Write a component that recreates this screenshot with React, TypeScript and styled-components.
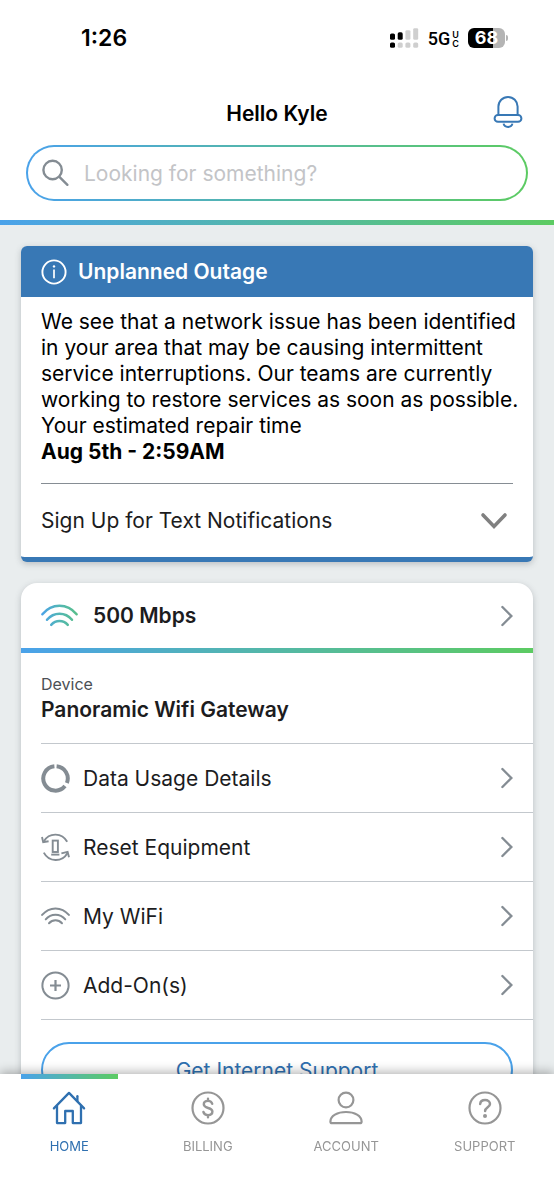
import React from 'react';
import styled, { createGlobalStyle } from 'styled-components';

const color = {
  blue: '#3878b5',
  link: '#2f70b0',
  sky: '#4aa2ea',
  page: '#e9edee',
  ink: '#1c1c1e',
  icon: '#848c93',
  tab: '#969696',
  line: '#c3c8cd',
};
const gradient = 'linear-gradient(90deg, #4aa2ea 0%, #54b8a6 50%, #5ccb62 100%)';

const GlobalStyle = createGlobalStyle`
  *, *::before, *::after { box-sizing: border-box; }
  body {
    margin: 0;
    background: #fff;
    color: ${color.ink};
    font-family: Inter, "Liberation Sans", sans-serif;
    -webkit-font-smoothing: antialiased;
  }
  h1, h2, p { margin: 0; }
  a { color: inherit; text-decoration: none; }
  button { font: inherit; color: inherit; border: 0; background: none; padding: 0; cursor: pointer; }
  svg { display: block; flex: none; }
`;

const Shell = styled.div`
  height: 100vh;
  display: flex;
  flex-direction: column;
`;

const StatusBar = styled.div`
  display: flex;
  align-items: center;
  justify-content: space-between;
  padding: 0 46px 0 81px;
  height: 75px;
  flex: none;
  color: #000;
`;

const Clock = styled.time`
  font-size: 23px;
  font-weight: 600;
`;

const StatusIcons = styled.div`
  display: flex;
  align-items: center;
`;

const Network = styled.div`
  display: flex;
  align-items: center;
  gap: 2px;
  margin: 2px 9px 0 9px;
  font-family: Roboto, sans-serif;
  font-size: 18px;
  font-weight: 500;
`;

const NetworkSuffix = styled.span`
  display: flex;
  flex-direction: column;
  font-family: Inter, sans-serif;
  font-size: 9px;
  font-weight: 600;
  line-height: 9px;
`;

const Battery = styled.div<{ $level: number }>`
  width: 37px;
  height: 20px;
  border-radius: 6px;
  background: linear-gradient(90deg, #000 ${p => p.$level}%, #b4b4b4 ${p => p.$level}%);
  color: #fff;
  font-size: 18px;
  font-weight: 700;
  line-height: 20px;
  text-align: center;
`;

const BatteryTip = styled.div`
  width: 2px;
  height: 6px;
  margin-left: 1px;
  border-radius: 0 2px 2px 0;
  background: #b4b4b4;
`;

const TopBar = styled.header`
  display: grid;
  grid-template-columns: 30px 1fr 30px;
  align-items: center;
  flex: none;
  height: 70px;
  padding: 4px 31px 0;
`;

const Greeting = styled.h1`
  grid-column: 2;
  text-align: center;
  font-size: 21px;
  font-weight: 600;
  line-height: 26px;
  color: #000;
  padding-top: 4px;
`;

const SearchArea = styled.form`
  flex: none;
  padding: 0 26px 19px;
`;

const SearchBox = styled.label`
  display: flex;
  align-items: center;
  gap: 14px;
  height: 56px;
  padding: 0 14px;
  border: 2px solid transparent;
  border-radius: 28px;
  background: linear-gradient(#fff, #fff) padding-box, ${gradient} border-box;
`;

const SearchInput = styled.input`
  flex: 1;
  min-width: 0;
  border: 0;
  outline: 0;
  padding: 0;
  background: none;
  font: inherit;
  font-size: 21px;
  &::placeholder { color: #c3c4c7; opacity: 1; }
`;

const GradientBar = styled.div`
  flex: none;
  height: 5px;
  background: ${gradient};
`;

const Content = styled.main`
  flex: 1;
  min-height: 0;
  overflow-y: auto;
  scrollbar-width: none;
  padding: 21px 21px 0;
  background: ${color.page};
  display: flex;
  flex-direction: column;
  gap: 21px;
`;

const Card = styled.section<{ $radius: number }>`
  flex: none;
  overflow: hidden;
  border-radius: ${p => p.$radius}px;
  background: #fff;
  box-shadow: 0 2px 6px rgba(60, 70, 80, 0.28);
`;

const AlertCard = styled(Card)`
  border-bottom: 5px solid ${color.blue};
`;

const AlertHeader = styled.div`
  display: flex;
  align-items: center;
  gap: 11px;
  height: 51px;
  padding: 0 20px;
  background: ${color.blue};
  color: #fff;
`;

const AlertTitle = styled.h2`
  font-size: 21px;
  font-weight: 600;
`;

const AlertText = styled.p`
  padding: 12px 12px 18px 20px;
  font-size: 21px;
  line-height: 26px;
  color: #000;
`;

const AlertFooter = styled.div`
  margin: 0 20px;
  border-top: 1px solid #868d94;
`;

const Expander = styled.button`
  display: flex;
  align-items: center;
  justify-content: space-between;
  width: 100%;
  height: 73px;
  padding-right: 5px;
  font-size: 21px;
`;

const PlanLink = styled.a`
  display: flex;
  align-items: center;
  gap: 15px;
  height: 65px;
  padding: 0 20px;
  font-size: 21px;
  font-weight: 600;
`;

const RowLabel = styled.span`
  flex: 1;
`;

const Details = styled.div`
  padding-left: 20px;
`;

const Device = styled.div`
  padding: 19px 0;
  border-bottom: 1px solid ${color.line};
`;

const DeviceCaption = styled.p`
  font-size: 16px;
  line-height: 24px;
  color: #4c5055;
`;

const DeviceName = styled.p`
  font-size: 21px;
  font-weight: 600;
  line-height: 28px;
`;

const RowLink = styled.a`
  display: flex;
  align-items: center;
  gap: 13px;
  min-height: 69px;
  padding-right: 20px;
  border-bottom: 1px solid ${color.line};
  font-size: 21px;
`;

const SupportArea = styled.div`
  padding: 22px 20px;
`;

const SupportLink = styled.a`
  display: flex;
  align-items: center;
  justify-content: center;
  height: 56px;
  border: 2px solid ${color.sky};
  border-radius: 28px;
  color: ${color.link};
  font-size: 21px;
`;

const TabBar = styled.nav`
  position: relative;
  flex: none;
  display: grid;
  grid-template-columns: repeat(4, 1fr);
  height: 126px;
  background: #fff;
  box-shadow: 0 -2px 10px rgba(0, 0, 0, 0.3);
`;

const Tab = styled.a<{ $active?: boolean }>`
  display: flex;
  flex-direction: column;
  align-items: center;
  gap: 12px;
  color: ${p => (p.$active ? color.link : color.tab)};
  font-size: 13px;
  line-height: 18px;
  &::before {
    content: "";
    width: 70%;
    height: 5px;
    background: ${p => (p.$active ? gradient : 'none')};
  }
`;

const SignalIcon = () => (
  <svg width="29" height="20" viewBox="0 0 29 20" aria-hidden="true">
    <rect x="0" y="5.5" width="5" height="6.3" rx="1.6" fill="#000" />
    <rect x="7.7" y="4.3" width="5" height="7.5" rx="1.6" fill="#000" />
    <rect x="15.4" y="2.2" width="5" height="9.6" rx="1.4" fill="#cfcfcf" />
    <rect x="23.2" y="0.2" width="5" height="11.6" rx="1.4" fill="#cfcfcf" />
    <rect x="0" y="14.4" width="5" height="5.4" rx="1.6" fill="#000" />
    <rect x="7.7" y="14.4" width="5" height="5.4" rx="1.6" fill="#cfcfcf" />
    <rect x="15.4" y="14.4" width="5" height="5.4" rx="1.6" fill="#cfcfcf" />
    <rect x="23.2" y="14.4" width="5" height="5.4" rx="1.6" fill="#cfcfcf" />
  </svg>
);

const BellIcon = () => (
  <svg width="30" height="32" viewBox="0 0 30 32" fill="none" stroke={color.blue} strokeWidth="2" aria-hidden="true">
    <path d="M5.4 19V10.6A9.6 9.6 0 0 1 15 1a9.6 9.6 0 0 1 9.6 9.6V19" />
    <rect x="1.6" y="19" width="26.8" height="6.8" rx="3.4" />
    <path d="M10.6 27.6c.8 4.4 8 4.4 8.8 0" />
  </svg>
);

const SearchIcon = () => (
  <svg width="28" height="28" viewBox="0 0 28 28" fill="none" stroke={color.icon} strokeWidth="2.4" strokeLinecap="round" aria-hidden="true">
    <circle cx="10.6" cy="11" r="9.2" />
    <path d="M17.4 17.8 25.4 25.8" />
  </svg>
);

const InfoIcon = () => (
  <svg width="26" height="26" viewBox="0 0 26 26" fill="none" stroke="#fff" aria-hidden="true">
    <circle cx="13" cy="13" r="11.6" strokeWidth="1.9" />
    <path d="M13 10.6v8.6" strokeWidth="1.7" />
    <circle cx="13" cy="7.4" r="1.2" fill="#fff" stroke="none" />
  </svg>
);

const ChevronDown = () => (
  <svg width="28" height="18" viewBox="0 0 28 18" fill="none" stroke="#808080" strokeWidth="3.6" strokeLinecap="round" aria-hidden="true">
    <path d="M3 3 14 14.4 25 3" />
  </svg>
);

const ChevronRight = () => (
  <svg width="14" height="22" viewBox="0 0 14 22" fill="none" stroke={color.icon} strokeWidth="2.4" strokeLinecap="round" aria-hidden="true">
    <path d="M3.4 2 12.4 11 3.4 20" />
  </svg>
);

const WifiArcs = () => (
  <>
    <path d="M1.4 10.2C10.8-1 26.2-1 35.6 10.2" />
    <path d="M6 15.8c6.8-8 18.2-8 25 0" />
    <path d="M10.2 20.8c4.6-5 12-5 16.6 0" />
  </>
);

const PlanWifiIcon = () => (
  <svg width="37" height="23" viewBox="0 0 37 23" fill="none" stroke="url(#wifi)" strokeWidth="2.5" strokeLinecap="round" aria-hidden="true">
    <defs>
      <linearGradient id="wifi" gradientUnits="userSpaceOnUse" x1="0" y1="0" x2="37" y2="0">
        <stop offset="0" stopColor="#4aa2ea" />
        <stop offset="0.5" stopColor="#53b7b4" />
        <stop offset="1" stopColor="#58bf88" />
      </linearGradient>
    </defs>
    <WifiArcs />
  </svg>
);

const UsageIcon = () => (
  <svg width="29" height="29" viewBox="0 0 29 29" fill="none" stroke={color.icon} strokeWidth="4" aria-hidden="true">
    <path d="M15.6 2.3A12.2 12.2 0 0 1 25.9 18.9" />
    <path d="M24 22.1A12.2 12.2 0 1 1 13.4 2.3" />
  </svg>
);

const ResetIcon = () => (
  <svg width="29" height="29" viewBox="0 0 29 29" fill="none" stroke={color.icon} strokeWidth="1.9" aria-hidden="true">
    <path d="M2.8 8.4C8.2-.8 21-.6 26.2 8.8" />
    <path d="M2.8 19.6c5.2 9.6 18 10 23.6.6" />
    <path d="M1 4 2.2 9.2l5.4-1" />
    <path d="M20.4 20.4l6.2-1.6 1.4 5.4" />
    <rect x="11.7" y="7.6" width="5.2" height="11.4" />
    <path d="M10.2 21.6h8.2" />
  </svg>
);

const SmallWifiIcon = () => (
  <svg width="29" height="18" viewBox="0 0 37 23" fill="none" stroke={color.icon} strokeWidth="2.5" strokeLinecap="round" aria-hidden="true">
    <WifiArcs />
  </svg>
);

const AddIcon = () => (
  <svg width="29" height="29" viewBox="0 0 29 29" fill="none" stroke={color.icon} aria-hidden="true">
    <circle cx="14.5" cy="14.5" r="13.1" strokeWidth="2" />
    <path d="M14.5 9v11M9 14.5h11" strokeWidth="2.2" />
  </svg>
);

const tabIcon = { width: 34, height: 34, viewBox: '0 0 34 34', fill: 'none', stroke: 'currentColor', 'aria-hidden': true } as const;

const HomeIcon = () => (
  <svg {...tabIcon} strokeWidth="2.3" strokeLinecap="round" strokeLinejoin="round">
    <path d="M1.9 17.4 17 1.9l15.1 15.5" />
    <path d="M5 15v17.1h8.2V20h7.6v12.1H29V15" />
    <path d="M25.4 10.2V5.2" />
  </svg>
);

const BillingIcon = () => (
  <svg {...tabIcon} strokeLinecap="round">
    <circle cx="17" cy="17" r="15.5" strokeWidth="2.2" />
    <path d="M21.2 12.8c-.5-1.9-2-2.9-4.2-2.9-2.5 0-4.2 1.3-4.2 3.4 0 4.8 8.6 2.6 8.6 7.3 0 2.2-1.8 3.5-4.4 3.5-2.4 0-4.1-1.1-4.6-3.2M17 7.7v2M17 24.3v2" strokeWidth="2.4" />
  </svg>
);

const AccountIcon = () => (
  <svg {...tabIcon} strokeWidth="2.2" strokeLinejoin="round">
    <circle cx="17" cy="9" r="7.4" />
    <path d="M3.2 32.2h27.6a1.8 1.8 0 0 0 1.8-1.8c0-5.6-7-9.4-15.6-9.4S1.4 24.8 1.4 30.4a1.8 1.8 0 0 0 1.8 1.8z" />
  </svg>
);

const SupportIcon = () => (
  <svg {...tabIcon} strokeLinecap="round">
    <circle cx="17" cy="17" r="15.5" strokeWidth="2.2" />
    <path d="M12.2 13c.2-2.4 2.2-3.9 4.9-3.9 2.8 0 4.9 1.6 4.9 4 0 3.2-4.9 3.300-4.9 7" strokeWidth="2.5" />
    <circle cx="17" cy="24.9" r="2" fill="currentColor" stroke="none" />
  </svg>
);

const rows = [
  { label: 'Data Usage Details', Icon: UsageIcon },
  { label: 'Reset Equipment', Icon: ResetIcon },
  { label: 'My WiFi', Icon: SmallWifiIcon },
  { label: 'Add-On(s)', Icon: AddIcon },
];

const tabs = [
  { label: 'HOME', Icon: HomeIcon, active: true },
  { label: 'BILLING', Icon: BillingIcon, active: false },
  { label: 'ACCOUNT', Icon: AccountIcon, active: false },
  { label: 'SUPPORT', Icon: SupportIcon, active: false },
];

export default function App() {
  return (
    <Shell>
      <GlobalStyle />
      <StatusBar>
        <Clock>1:26</Clock>
        <StatusIcons>
          <SignalIcon />
          <Network>
            5G
            <NetworkSuffix>
              <span>U</span>
              <span>C</span>
            </NetworkSuffix>
          </Network>
          <Battery $level={68}>68</Battery>
          <BatteryTip />
        </StatusIcons>
      </StatusBar>
      <TopBar>
        <Greeting>Hello Kyle</Greeting>
        <button type="button" aria-label="Notifications">
          <BellIcon />
        </button>
      </TopBar>
      <SearchArea role="search">
        <SearchBox>
          <SearchIcon />
          <SearchInput type="text" aria-label="Search" placeholder="Looking for something?" />
        </SearchBox>
      </SearchArea>
      <GradientBar />
      <Content>
        <AlertCard $radius={6}>
          <AlertHeader>
            <InfoIcon />
            <AlertTitle>Unplanned Outage</AlertTitle>
          </AlertHeader>
          <AlertText>
            We see that a network issue has been identified in your area that may be causing intermittent service
            interruptions. Our teams are currently working to restore services as soon as possible. Your estimated
            repair time
            <br />
            <strong>Aug 5th - 2:59AM</strong>
          </AlertText>
          <AlertFooter>
            <Expander type="button" aria-expanded="false">
              Sign Up for Text Notifications
              <ChevronDown />
            </Expander>
          </AlertFooter>
        </AlertCard>
        <Card $radius={16}>
          <PlanLink href="#plan">
            <PlanWifiIcon />
            <RowLabel>500 Mbps</RowLabel>
            <ChevronRight />
          </PlanLink>
          <GradientBar />
          <Details>
            <Device>
              <DeviceCaption>Device</DeviceCaption>
              <DeviceName>Panoramic Wifi Gateway</DeviceName>
            </Device>
            {rows.map(({ label, Icon }) => (
              <RowLink key={label} href="#details">
                <Icon />
                <RowLabel>{label}</RowLabel>
                <ChevronRight />
              </RowLink>
            ))}
          </Details>
          <SupportArea>
            <SupportLink href="#support">Get Internet Support</SupportLink>
          </SupportArea>
        </Card>
      </Content>
      <TabBar>
        {tabs.map(({ label, Icon, active }) => (
          <Tab key={label} href={`#${label.toLowerCase()}`} $active={active} aria-current={active ? 'page' : undefined}>
            <Icon />
            {label}
          </Tab>
        ))}
      </TabBar>
    </Shell>
  );
}
